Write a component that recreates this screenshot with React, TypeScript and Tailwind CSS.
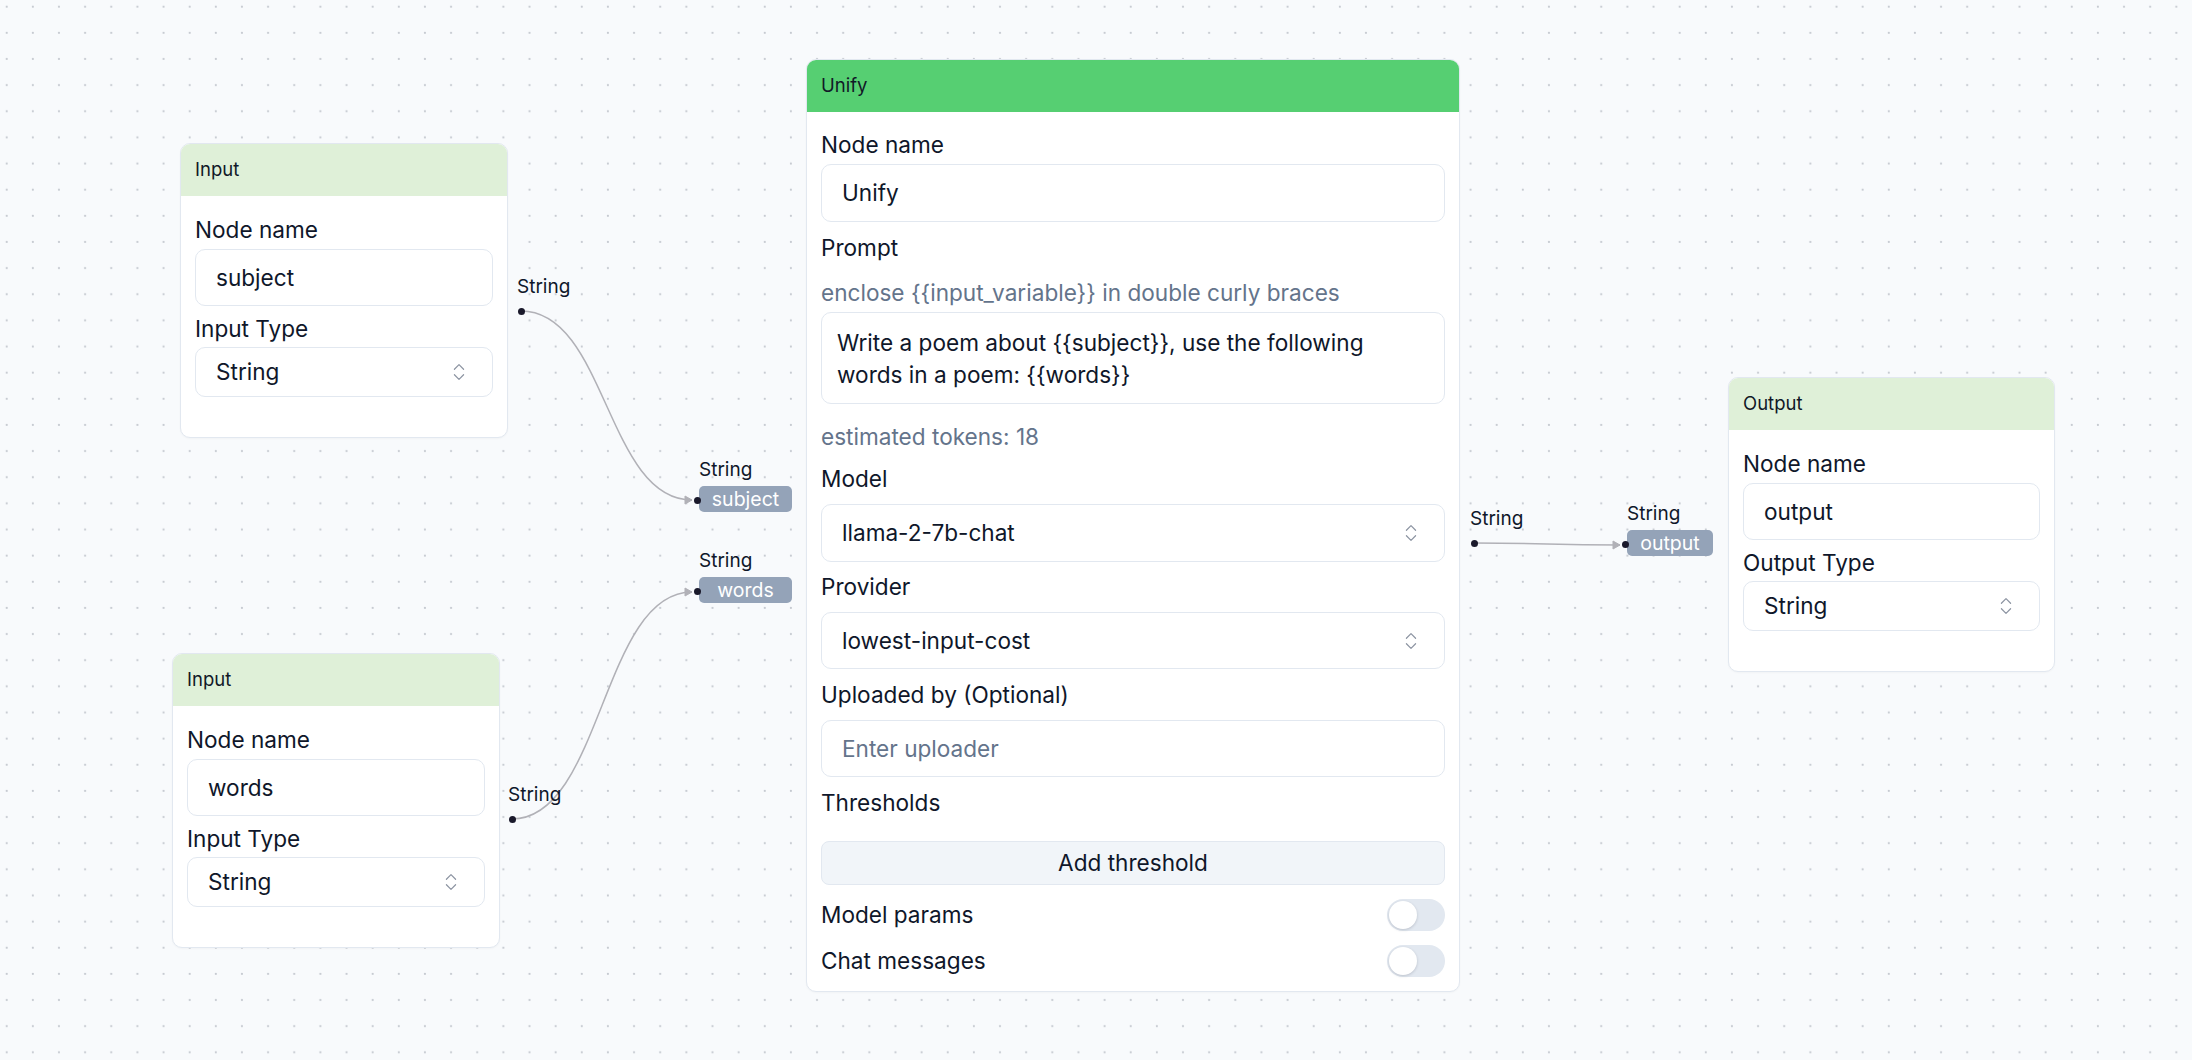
import { ChevronsUpDown } from 'lucide-react';
import type { ReactNode } from 'react';

const font = { fontFamily: 'Inter, "Noto Sans", sans-serif' };

function Label({ children, className = '' }: { children: ReactNode; className?: string }) {
  return <div className={`text-[22.6px] leading-[28px] text-[#0f172a] ${className}`}>{children}</div>;
}

function TextBox({ value, placeholder, className = '' }: { value?: string; placeholder?: string; className?: string }) {
  return (
    <div className={`h-[57px] rounded-[10px] border border-[#e2e8f0] bg-white flex items-center pl-[20px] text-[22.6px] ${className}`}>
      {value ? <span className="text-[#0f172a]">{value}</span> : <span className="text-[#64748b]">{placeholder}</span>}
    </div>
  );
}

function SelectBox({ value, className = '' }: { value: string; className?: string }) {
  return (
    <div className={`rounded-[10px] border border-[#e2e8f0] bg-white flex items-center justify-between pl-[20px] pr-[22px] text-[22.6px] text-[#0f172a] ${className}`}>
      <span>{value}</span>
      <ChevronsUpDown size={22} strokeWidth={1.3} className="text-[#8b93a1]" />
    </div>
  );
}

function Toggle() {
  return (
    <div className="w-[58px] h-[32px] rounded-full bg-[#e2e8f0] flex items-center px-[2px]">
      <div className="w-[28px] h-[28px] rounded-full bg-white shadow-[0_1px_3px_rgba(15,23,42,0.18)]" />
    </div>
  );
}

interface NodeProps {
  title: string;
  header: string;
  className: string;
  children: ReactNode;
}

function FlowNode({ title, header, className, children }: NodeProps) {
  return (
    <div className={`absolute rounded-[10px] border border-[#e2e8f0] bg-white shadow-[0_1px_2px_rgba(15,23,42,0.03)] ${className}`}>
      <div className={`h-[52px] rounded-t-[9px] px-[14px] flex items-center text-[18.5px] text-[#111827] ${header}`}>{title}</div>
      {children}
    </div>
  );
}

function IoNode({ title, name, typeLabel, className }: { title: string; name: string; typeLabel: string; className: string }) {
  return (
    <FlowNode title={title} header="bg-[#dff0d8]" className={className}>
      <div className="px-[14px] pt-[20px] pb-[40px]">
        <Label>Node name</Label>
        <TextBox value={name} className="mt-[5px]" />
        <Label className="mt-[9px]">{typeLabel}</Label>
        <SelectBox value="String" className="mt-[4px] h-[50px]" />
      </div>
    </FlowNode>
  );
}

const dot = 'w-[7px] h-[7px] rounded-full bg-[#1a192b]';

// output handle: type label sitting above the dot
function SourceHandle({ className }: { className: string }) {
  return (
    <div className={`absolute flex flex-col items-start gap-[9px] ${className}`}>
      <span className="text-[19px] leading-[24px] text-[#0f172a]">String</span>
      <span className={`ml-[1px] ${dot}`} />
    </div>
  );
}

// input handle: type label, then the dot and the input name badge
function TargetHandle({ name, width, className }: { name: string; width: string; className: string }) {
  return (
    <div className={`absolute flex flex-col items-start gap-[4px] ${className}`}>
      <span className="ml-[5px] text-[19px] leading-[24px] text-[#0f172a]">String</span>
      <div className="flex items-center">
        <span className={`relative z-10 mt-[2px] ${dot}`} />
        <span className={`-ml-[2px] h-[26px] rounded-[5px] bg-[#94a3b8] text-white text-[19.5px] leading-[26px] text-center ${width}`}>
          {name}
        </span>
      </div>
    </div>
  );
}

function Canvas() {
  const edges = [
    { sx: 521, sy: 311, tx: 692, ty: 500 },
    { sx: 512, sy: 819, tx: 692, ty: 592 },
    { sx: 1474, sy: 543, tx: 1620, ty: 545 },
  ];
  return (
    <svg className="absolute inset-0" width={2192} height={1060}>
      <defs>
        <pattern id="dots" x="0" y="0" width="26.14" height="26.14" patternUnits="userSpaceOnUse">
          <circle cx="6.7" cy="6.7" r="1.1" fill="#c5c9d0" />
        </pattern>
      </defs>
      <rect width="2192" height="1060" fill="url(#dots)" />
      {edges.map((e, i) => {
        const mx = (e.sx + e.tx) / 2;
        return (
          <g key={i}>
            <path
              d={`M${e.sx},${e.sy} C${mx},${e.sy} ${mx},${e.ty} ${e.tx},${e.ty}`}
              fill="none"
              stroke="#b1b1b7"
              strokeWidth={1.5}
            />
            <polygon
              points={`${e.tx - 7},${e.ty - 4} ${e.tx},${e.ty} ${e.tx - 7},${e.ty + 4}`}
              fill="#b1b1b7"
              stroke="#b1b1b7"
              strokeLinejoin="round"
            />
          </g>
        );
      })}
    </svg>
  );
}

export default function App() {
  return (
    <div className="relative w-[2192px] h-[1060px] overflow-hidden bg-[#f8fafc]" style={font}>
      <Canvas />

      <IoNode title="Input" name="subject" typeLabel="Input Type" className="left-[180px] top-[143px] w-[328px]" />
      <IoNode title="Input" name="words" typeLabel="Input Type" className="left-[172px] top-[653px] w-[328px]" />
      <IoNode title="Output" name="output" typeLabel="Output Type" className="left-[1728px] top-[377px] w-[327px]" />

      <FlowNode title="Unify" header="bg-[#56cf72]" className="left-[806px] top-[59px] w-[654px]">
        <div className="px-[14px] pt-[19px] pb-[14px]">
          <Label>Node name</Label>
          <TextBox value="Unify" className="mt-[5px] h-[58px]" />
          <Label className="mt-[12px]">Prompt</Label>
          <div className="mt-[17px] text-[22.6px] leading-[28px] text-[#64748b]">enclose {'{{input_variable}}'} in double curly braces</div>
          <div className="mt-[5px] h-[92px] rounded-[10px] border border-[#e2e8f0] px-[15px] pt-[14px] text-[22.6px] leading-[32px] text-[#0f172a] whitespace-nowrap">
            Write a poem about {'{{subject}}'}, use the following
            <br />
            words in a poem: {'{{words}}'}
          </div>
          <div className="mt-[19px] text-[22.6px] leading-[28px] text-[#64748b]">estimated tokens: 18</div>
          <Label className="mt-[14px]">Model</Label>
          <SelectBox value="llama-2-7b-chat" className="mt-[11px] h-[58px]" />
          <Label className="mt-[11px]">Provider</Label>
          <SelectBox value="lowest-input-cost" className="mt-[11px] h-[57px]" />
          <Label className="mt-[12px]">Uploaded by (Optional)</Label>
          <TextBox placeholder="Enter uploader" className="mt-[11px]" />
          <Label className="mt-[12px]">Thresholds</Label>
          <div className="mt-[24px] h-[44px] rounded-[8px] border border-[#e2e8f0] bg-[#f1f5f9] flex items-center justify-center text-[22.6px] text-[#0f172a]">
            Add threshold
          </div>
          <div className="mt-[14px] flex flex-col gap-[14px]">
            <div className="h-[32px] flex items-center justify-between">
              <Label>Model params</Label>
              <Toggle />
            </div>
            <div className="h-[32px] flex items-center justify-between">
              <Label>Chat messages</Label>
              <Toggle />
            </div>
          </div>
        </div>
      </FlowNode>

      <SourceHandle className="left-[517px] top-[275px]" />
      <SourceHandle className="left-[508px] top-[783px]" />
      <SourceHandle className="left-[1470px] top-[507px]" />

      <TargetHandle name="subject" width="w-[93px]" className="left-[694px] top-[458px]" />
      <TargetHandle name="words" width="w-[93px]" className="left-[694px] top-[549px]" />
      <TargetHandle name="output" width="w-[86px]" className="left-[1622px] top-[502px]" />
    </div>
  );
}
